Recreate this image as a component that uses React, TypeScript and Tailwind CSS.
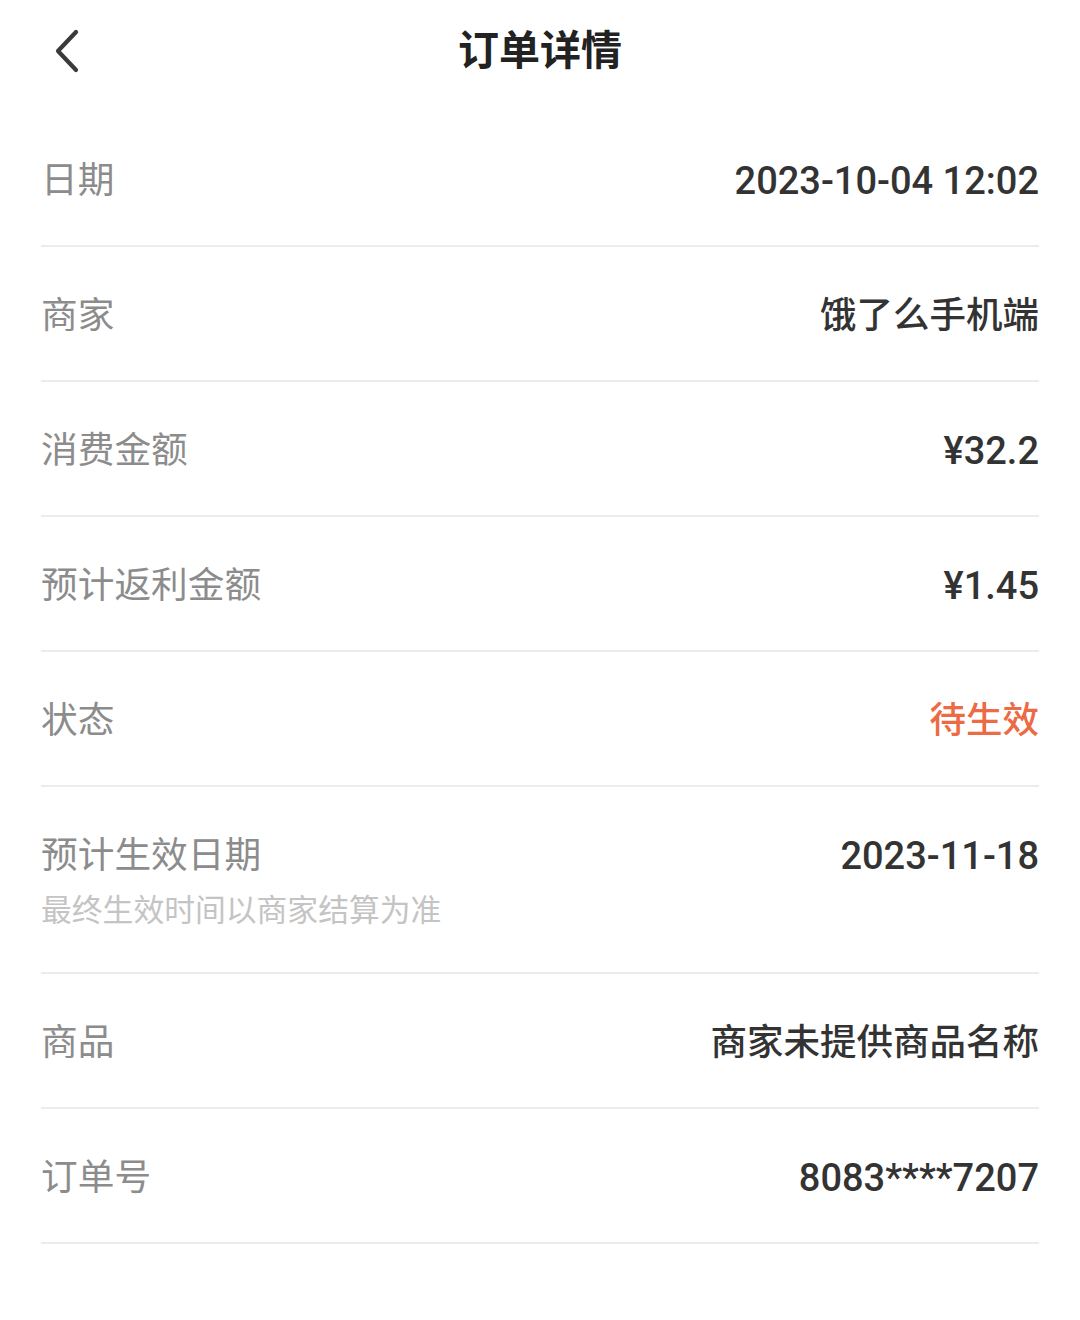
type Row = {
  label: string;
  value: string;
  hint?: string;
  highlight?: boolean;
  cjk?: boolean;
};

const rows: Row[] = [
  { label: "日期", value: "2023-10-04 12:02" },
  { label: "商家", value: "饿了么手机端", cjk: true },
  { label: "消费金额", value: "¥32.2" },
  { label: "预计返利金额", value: "¥1.45" },
  { label: "状态", value: "待生效", highlight: true },
  { label: "预计生效日期", value: "2023-11-18", hint: "最终生效时间以商家结算为准" },
  { label: "商品", value: "商家未提供商品名称", cjk: true },
  { label: "订单号", value: "8083****7207" },
];

function valueClass(row: Row) {
  if (row.highlight) return "text-[36.5px] leading-[48px] font-medium text-[#ec6a44]";
  if (row.cjk) return "text-[36.5px] leading-[48px] font-medium text-[#333333]";
  return "text-[38px] leading-[48px] font-medium text-[#333333]";
}

function DetailRow({ row }: { row: Row }) {
  if (row.hint) {
    return (
      <div className="border-b-2 border-[#ececec] pt-[45px] pb-[41px]">
        <div className="flex items-center justify-between">
          <span className="text-[36.7px] leading-[48px] text-[#8c8c8c]">{row.label}</span>
          <span className={valueClass(row)}>{row.value}</span>
        </div>
        <div className="mt-[11px] text-[30.8px] leading-[40px] text-[#c4c4c4]">{row.hint}</div>
      </div>
    );
  }
  return (
    <div className="flex h-[135px] items-center justify-between border-b-2 border-[#ececec] pt-[4px]">
      <span className="text-[36.7px] leading-[48px] text-[#8c8c8c]">{row.label}</span>
      <span className={valueClass(row)}>{row.value}</span>
    </div>
  );
}

export default function App() {
  return (
    <div
      className="min-h-[1320px] w-[1080px] bg-white"
      style={{ fontFamily: '"Roboto", "Noto Sans CJK SC", sans-serif' }}
    >
      <header className="relative flex h-[104px] items-center justify-center">
        <button className="absolute left-[50px] top-[26px]">
          <svg width="36" height="50" viewBox="0 0 36 50" fill="none">
            <polyline
              points="26,6 8,25 26,44"
              stroke="#3a3a3a"
              strokeWidth="4.2"
              strokeLinecap="round"
              strokeLinejoin="round"
            />
          </svg>
        </button>
        <h1 className="text-[41px] font-bold text-[#222222]">订单详情</h1>
      </header>
      <div className="mx-[41px] mt-[8px]">
        {rows.map((row) => (
          <DetailRow key={row.label} row={row} />
        ))}
      </div>
    </div>
  );
}
